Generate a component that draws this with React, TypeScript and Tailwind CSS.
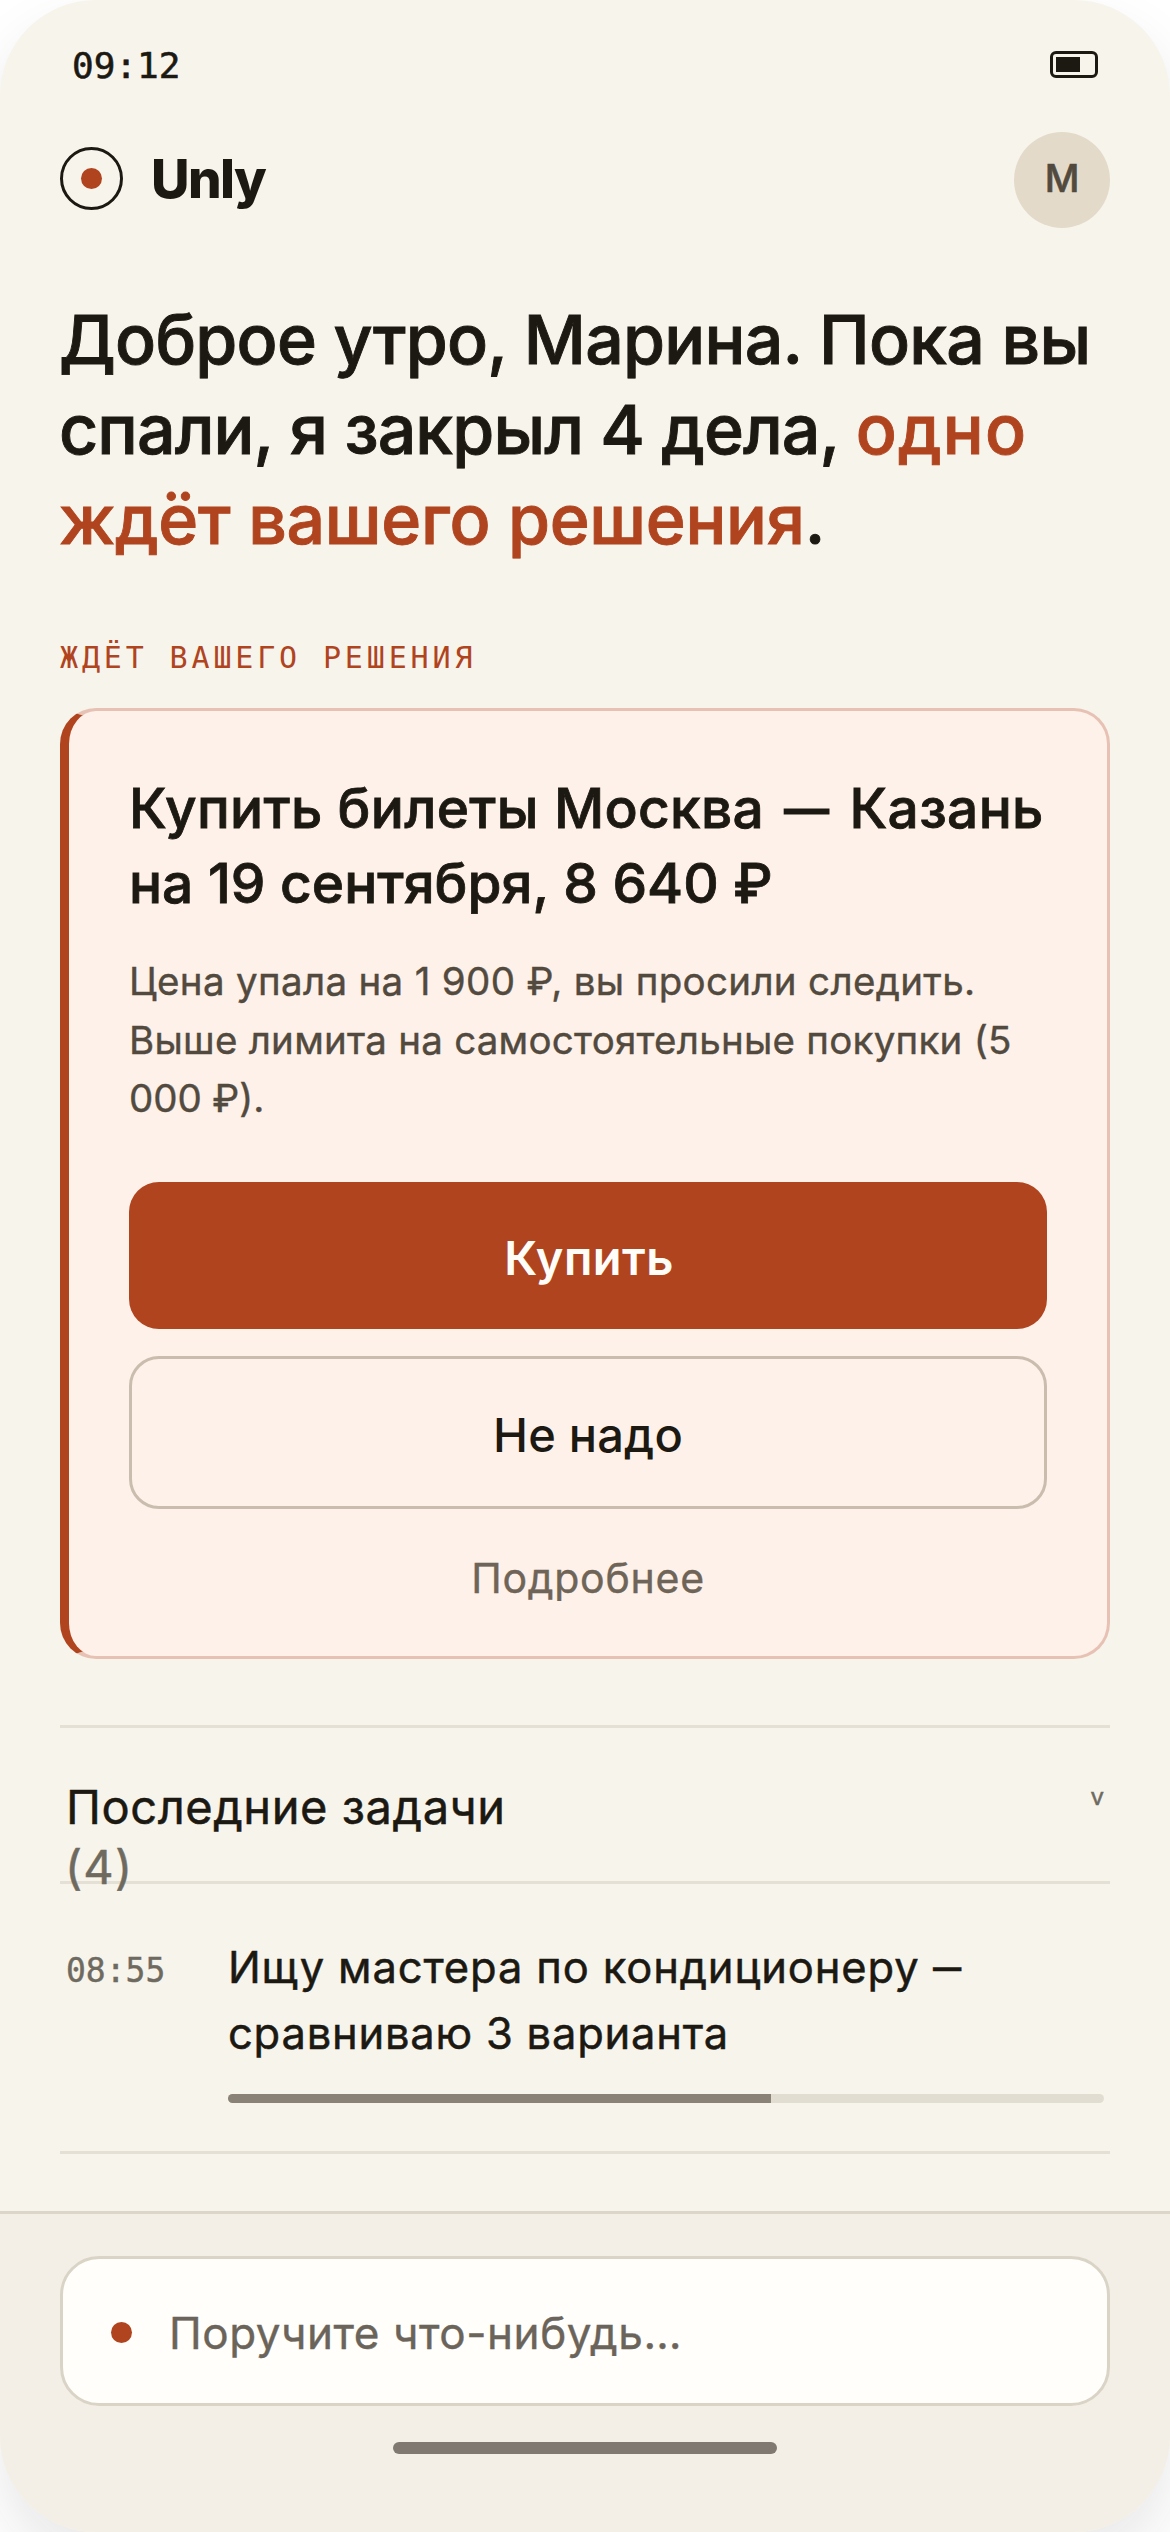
const progress = 62;

function StatusBar() {
  return (
    <div className="flex h-[132px] shrink-0 items-start justify-between pl-[72px] pr-[72px] pt-[45px] text-[#1c1913]">
      <div className="font-['DejaVu_Sans_Mono',monospace] text-[36px] leading-[41px] [-webkit-text-stroke:0.6px]">09:12</div>
      <div className="mt-[6px] flex h-[27px] w-12 rounded-[6px] border-[3px] border-[#1c1913] p-[3px]">
        <div className="h-[15px] w-6 bg-[#1c1913]" />
      </div>
    </div>
  );
}

function Header() {
  return (
    <header className="flex h-24 shrink-0 items-center justify-between px-[60px]">
      <div className="-mt-[3px] flex items-center gap-[28px]">
        <div className="flex size-[63px] items-center justify-center rounded-full border-[3px] border-[#1c1913]">
          <div className="size-[21px] rounded-full bg-[#b0441f]" />
        </div>
        <div className="pt-[2px] text-[53px] leading-[63px] font-extrabold tracking-[-1.6px]">Unly</div>
      </div>
      <div className="flex size-24 items-center justify-center rounded-full bg-[#e3dac9] pb-[3px] text-[38px] font-medium text-[#524a3e] [-webkit-text-stroke:0.6px]">
        М
      </div>
    </header>
  );
}

function DecisionCard() {
  return (
    <section className="mx-[60px] mt-[35px] flex h-[951px] shrink-0 flex-col rounded-[36px] border-[3px] border-l-[9px] border-[#e7c2b4] border-l-[#b0441f] bg-[#fef1e9] px-[60px] pt-[60px]">
      <h2 className="text-[55px] leading-[75px] font-medium whitespace-nowrap [-webkit-text-stroke:0.8px]">
        <span className="block tracking-[0.33px]">
          Купить билеты Москва <span className="inline-block scale-x-[0.82]">—</span> Казань
        </span>
        <span className="block">на 19 сентября, 8 640 ₽</span>
      </h2>
      <p className="mt-[31px] text-[38.5px] leading-[58.5px] whitespace-nowrap text-[#524a3e] [-webkit-text-stroke:0.4px]">
        <span className="block tracking-[0.33px]">Цена упала на 1 900 ₽, вы просили следить.</span>
        <span className="block tracking-[0.25px]">Выше лимита на самостоятельные покупки (5</span>
        <span className="block tracking-[-0.1px]">000 ₽).</span>
      </p>
      <button className="mt-[54.5px] flex h-[147px] shrink-0 items-center justify-center rounded-[30px] bg-[#b0441f] pt-1 pl-[2px] text-[47px] leading-[60px] font-semibold tracking-[0.44px] text-[#fffdf8]">
        Купить
      </button>
      <button className="mt-[27px] flex h-[153px] shrink-0 items-center justify-center rounded-[30px] border-[3px] border-[#cabdae] pt-1 text-[47px] leading-[60px] font-medium tracking-[0.21px]">
        Не надо
      </button>
      <button className="mt-[39px] text-[41px] leading-[60px] tracking-[0.76px] text-[#6e6458] [-webkit-text-stroke:0.4px]">Подробнее</button>
    </section>
  );
}

function RecentTasks() {
  return (
    <section className="mx-[60px] mt-[66px] shrink-0">
      <div className="flex h-[159px] items-start justify-between border-y-[3px] border-[#e4e0d5] px-[6px] pt-[49px] [-webkit-text-stroke:0.5px]">
        <div className="text-[47px] leading-[60px]">
          <div className="tracking-[0.57px]">Последние задачи</div>
          <div className="-ml-px tracking-[1.2px] text-[#6e6a60]">(4)</div>
        </div>
        <div className="mt-[2px] text-[24px] leading-9 text-[#6e6a60]">v</div>
      </div>
      <div className="flex h-[270px] border-b-[3px] border-[#e4e0d5] px-[6px] pt-[50px]">
        <div className="w-[162px] shrink-0 pt-[4px] font-['DejaVu_Sans_Mono',monospace] text-[33px] leading-[66px] text-[#6e6a60] [-webkit-text-stroke:0.4px]">
          08:55
        </div>
        <div className="flex-1 text-[43.5px] leading-[66px] whitespace-nowrap [-webkit-text-stroke:0.5px]">
          <div className="tracking-[0.85px]">
            Ищу мастера по кондиционеру{" "}
            <span className="inline-block origin-left scale-x-[0.65]">—</span>
          </div>
          <div className="tracking-[0.77px]">сравниваю 3 варианта</div>
          <div className="mt-[28px] h-[9px] overflow-hidden rounded-full bg-[#e2ddd1]">
            <div className="h-full bg-[#8a8277]" style={{ width: `${progress}%` }} />
          </div>
        </div>
      </div>
    </section>
  );
}

function Dock() {
  return (
    <footer className="mt-auto h-[321px] shrink-0 border-t-[3px] border-[#dcd6ca] bg-[#f4efe6] px-[60px] pt-[42px]">
      <div className="flex h-[150px] items-center rounded-[39px] border-[3px] border-[#dad4c7] bg-[#fffefa] pl-12">
        <div className="mt-[3px] size-[21px] rounded-full bg-[#b0441f]" />
        <div className="ml-[37px] pt-[4px] text-[44px] leading-[60px] tracking-[0.56px] text-[#6b645a] [-webkit-text-stroke:0.4px]">
          Поручите что-нибудь…
        </div>
      </div>
      <div className="mx-auto mt-9 h-3 w-96 rounded-full bg-[#7f7972]" />
    </footer>
  );
}

export default function App() {
  return (
    <div className="h-[2532px] w-[1170px] overflow-hidden bg-white">
      <div className="flex h-full w-full flex-col overflow-hidden rounded-[96px] bg-[#f7f4ec] font-['Inter',sans-serif] text-[#1c1913] shadow-[0_30px_60px_rgba(30,30,40,0.1)]">
        <StatusBar />
        <Header />
        <h1 className="mt-[66px] shrink-0 pl-[59px] text-[68px] leading-[90px] font-medium whitespace-nowrap [-webkit-text-stroke:0.9px]">
          <span className="block tracking-[-0.75px]">Доброе утро, Марина. Пока вы</span>
          <span className="block tracking-[-0.9px]">
            спали, я закрыл 4 дела, <span className="tracking-[1.2px] text-[#b0441f]">одно</span>
          </span>
          <span className="block tracking-[-0.3px]">
            <span className="text-[#b0441f]">ждёт вашего решения</span>.
          </span>
        </h1>
        <div className="mt-[74px] h-[35px] shrink-0 pl-[60px] font-['DejaVu_Sans_Mono',monospace] text-[30px] leading-[40px] tracking-[3.85px] text-[#b0441f]">
          ЖДЁТ ВАШЕГО РЕШЕНИЯ
        </div>
        <DecisionCard />
        <RecentTasks />
        <Dock />
      </div>
    </div>
  );
}
